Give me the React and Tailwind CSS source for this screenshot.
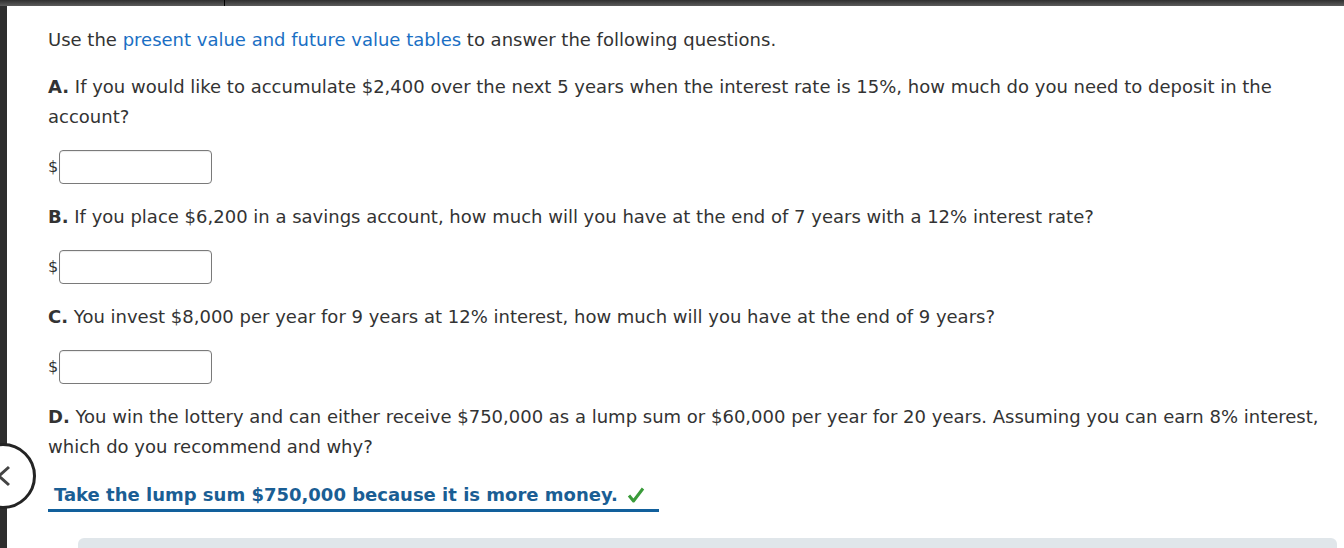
import React from "react";

function MoneyInput() {
  return (
    <div className="flex items-center h-[34px] mt-[18px]">
      <span className="w-[11px] text-[16px] leading-none">$</span>
      <div className="w-[153px] h-[34px] rounded-[4px] border border-[#7a7a7a] bg-white shadow-[inset_0_1px_1px_rgba(0,0,0,0.08)]" />
    </div>
  );
}

export default function App() {
  return (
    <div
      className="relative w-[1344px] h-[548px] overflow-hidden bg-white text-[#333333]"
      style={{ fontFamily: '"DejaVu Sans", Verdana, sans-serif' }}
    >
      {/* top bar */}
      <div className="relative h-[6px] bg-gradient-to-b from-[#2f2f2f] to-[#5c5c5c]">
        <div className="absolute left-[224px] top-0 h-[6px] w-[1px] bg-black" />
      </div>
      <div className="flex h-[542px]">
        {/* left strip */}
        <div className="w-[7px] shrink-0 bg-[#2e2e2e]" />
        <div className="flex-1 pl-[41px] pr-[7px] pt-[19px] text-[18px] leading-[30px]">
          <p>
            Use the <span className="text-[#1a6fc4]">present value and future value tables</span> to answer the following questions.
          </p>
          <p className="mt-[17px]">
            <b>A.</b> If you would like to accumulate $2,400 over the next 5 years when the interest rate is 15%, how much do you need to deposit in the account?
          </p>
          <MoneyInput />
          <p className="mt-[18px]">
            <b>B.</b> If you place $6,200 in a savings account, how much will you have at the end of 7 years with a 12% interest rate?
          </p>
          <MoneyInput />
          <p className="mt-[18px]">
            <b>C.</b> You invest $8,000 per year for 9 years at 12% interest, how much will you have at the end of 9 years?
          </p>
          <MoneyInput />
          <p className="mt-[18px]">
            <b>D.</b> You win the lottery and can either receive $750,000 as a lump sum or $60,000 per year for 20 years. Assuming you can earn 8% interest, which do you recommend and why?
          </p>
          <div className="mt-[19px] inline-flex items-center border-b-[3px] border-[#12609c] pl-[6px] pr-[14px] leading-[28px]">
            <span className="font-bold text-[#1a5e94]">Take the lump sum $750,000 because it is more money.</span>
            <svg className="ml-[9px]" width="18" height="18" viewBox="0 0 18 18">
              <path d="M2 9.5 L6.5 15 L16 2.5" fill="none" stroke="#3a9b3a" strokeWidth="3" strokeLinejoin="round" />
            </svg>
          </div>
          <div className="ml-[30px] mt-[26px] h-[40px] rounded-[6px] bg-[#e0e6ea]" />
        </div>
      </div>
      {/* back circle */}
      <div className="absolute left-[-30px] top-[443px] w-[66px] h-[66px] rounded-full border-[3px] border-[#242424] bg-white flex items-center justify-end pr-[22px]">
        <svg width="14" height="22" viewBox="0 0 14 22">
          <path d="M12 2 L2 11 L12 20" fill="none" stroke="#444" strokeWidth="3" />
        </svg>
      </div>
    </div>
  );
}
